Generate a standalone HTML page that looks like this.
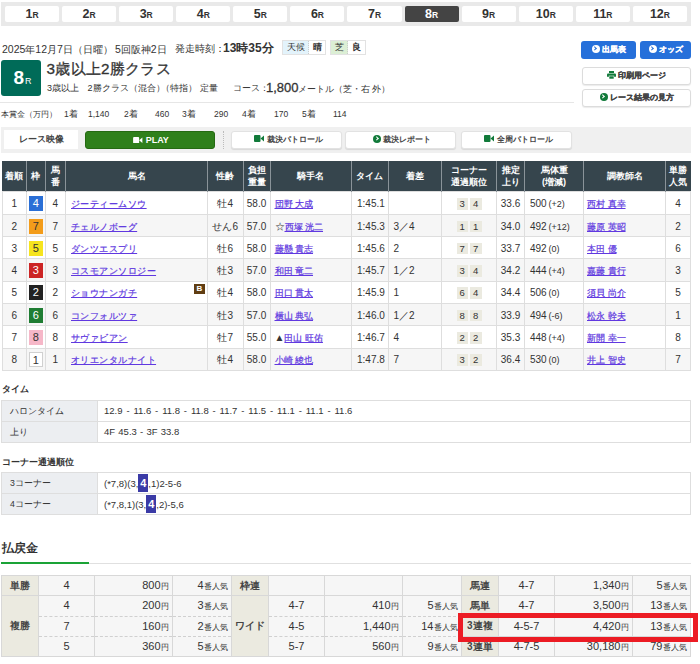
<!DOCTYPE html>
<html lang="ja">
<head>
<meta charset="utf-8">
<style>
*{box-sizing:border-box;margin:0;padding:0}
html,body{width:700px;height:664px;overflow:hidden;background:#fff}
body{font-family:"Liberation Sans",sans-serif;color:#333;font-size:10px;position:relative;line-height:1.2}
.abs{position:absolute}
/* race tabs */
#tabs{left:1px;top:2px;width:690px;height:24px;background:#e9e9e9;display:flex;padding:4px;gap:3px}
#tabs div{flex:1;background:#fff;border-radius:2px;text-align:center;font-weight:bold;font-size:12.5px;line-height:16px;color:#333}
#tabs div small{font-size:8.5px;font-weight:bold}
#tabs div.cur{background:#444;color:#fff}
/* header */
.dl{font-size:9.5px;white-space:nowrap;top:43px}
.big{font-weight:bold;font-size:13px}
.dl .n{font-size:10.5px}
#rno{left:1px;top:60px;width:40px;height:36px;background:#006b58;border-radius:3px;color:#fff;text-align:center;font-weight:bold;font-size:19px;line-height:36px;padding-left:3px}
#rno small{font-size:9px;font-weight:normal;margin-left:1px}
.wbox{top:40px;height:15px;border:1px solid #e2e2e2;display:flex;font-size:9px;line-height:13px}
.wbox span{display:block;text-align:center}
.btnb{top:41px;height:18px;background:#2670da;border-radius:3px;color:#fff;font-weight:bold;font-size:8px;line-height:18px;text-align:center}
.btnb .ci:after{border-color:#2670da}
.btnw{left:582px;width:109px;height:18px;background:#fff;border:1px solid #dcdcdc;border-radius:3px;box-shadow:0 1px 1px rgba(0,0,0,.08);font-weight:bold;font-size:8px;line-height:16px;text-align:center;color:#444}
.ci{display:inline-block;width:8px;height:8px;border-radius:50%;vertical-align:-1px;margin-right:2px;position:relative}
.ci:after{content:"";position:absolute;left:1.6px;top:2.4px;width:2.4px;height:2.4px;border-top:1.3px solid #fff;border-right:1.3px solid #fff;transform:rotate(45deg)}
.pr{display:inline-block;width:9px;height:8px;vertical-align:-1px;margin-right:2px}
/* prize */
.prize{top:109px;font-size:8.5px;white-space:nowrap}
/* video bar */
#vbar{left:1px;top:127px;width:690px;height:26px;background:#f0f0f0}
.vb{top:131px;height:18px;background:#fff;border-radius:3px;border:1px solid #e2e2e2;box-shadow:0 1px 1px rgba(0,0,0,.1);font-size:8px;padding-left:3px;font-weight:bold;line-height:16px;text-align:center;color:#444}
/* result table */
table{border-collapse:collapse;table-layout:fixed}
#res{left:1.5px;top:161px;width:689px}
#res th{background:#36454d;color:#fff;font-size:9px;font-weight:bold;border-left:1px solid #8a9399;height:30px;line-height:12px;text-align:center}
#res th:first-child{border-left:none}
#res td{border:1px solid #dedede;height:22.3px;font-size:10px;text-align:center;white-space:nowrap;overflow:hidden;padding-top:2px}
#res tr:nth-child(odd) td{background:#f6f6f6}
#res tr:nth-child(2) td{height:23.4px;padding-top:3px}
#res td.l{text-align:left;padding-left:5px}
#res a{color:#6038e0;text-decoration:underline;font-size:9.2px;letter-spacing:.45px;-webkit-text-stroke:.2px #6038e0}
#res td.nm{position:relative}
#res td.jk a{letter-spacing:0;font-size:9px}
#res td.jk{padding-left:4px}
.bl{position:absolute;right:2px;top:2.5px;width:11px;height:10px;background:#603d12;color:#fff;font-weight:bold;font-size:8px;line-height:10px;text-align:center}
.fr{display:inline-block;width:14.5px;height:15px;line-height:15px;font-size:11px;vertical-align:middle;margin-top:-1px}
.cb{display:inline-block;width:11.5px;height:11.5px;background:#ebeae0;font-size:9.5px;line-height:12px;margin:0 1px}
.wt small{font-size:9px;margin-left:-1px}
/* section heads */
.sh{font-weight:bold;font-size:9px;left:2px}
.st{left:1px;width:690px}
.st td{border:1px solid #dedede;height:21px;font-size:9.5px;padding-left:6px}
.st td.h{width:96px;background:#eceef1;padding-left:8px;font-size:8.7px}
.st span.t{display:inline-block;word-spacing:1.25px}
.hl{display:inline-block;background:#3b3ba6;color:#fff;font-weight:bold;width:10px;text-align:center;height:18px;line-height:18px;font-size:11px}
/* payout */
.pt{top:575px;width:231px}
.pt td{border:1px solid #d8d8d8;background:#f6f6f6;height:20.3px;font-size:11px;text-align:center;white-space:nowrap}
.pt td.h{background:#ebeae0;font-weight:bold;font-size:10px;color:#444}
.pt td.y{text-align:right;padding-right:3px}
.pt td.y small{font-size:8px}
.pt td.n{text-align:right;padding-right:3px}
.pt td.n small{font-size:8px}
.pt tr.dt td{border-top:1px dashed #d0d0d0}
.pt tr.db td{border-bottom:1px dashed #d0d0d0}
.pt tr td.h{border-top:1px solid #d8d8d8;border-bottom:1px solid #d8d8d8}
.btnb,.btnw{-webkit-text-stroke:.2px currentColor}
</style>
</head>
<body>
<div id="tabs" class="abs">
<div>1<small>R</small></div><div>2<small>R</small></div><div>3<small>R</small></div><div>4<small>R</small></div><div>5<small>R</small></div><div>6<small>R</small></div><div>7<small>R</small></div><div class="cur">8<small>R</small></div><div>9<small>R</small></div><div>10<small>R</small></div><div>11<small>R</small></div><div>12<small>R</small></div>
</div>

<div class="abs dl" style="left:2px"><span class="n">2025</span>年<span class="n">12</span>月<span class="n">7</span>日（日曜）</div>
<div class="abs dl" style="left:115px"><span class="n">5</span>回阪神<span class="n">2</span>日</div>
<div class="abs dl" style="left:175px">発走時刻：</div>
<div class="abs dl big" style="left:223px;top:41px;font-size:12px">13時35分</div>
<div class="abs wbox" style="left:282px;width:44px"><span style="width:26px;background:#e3f3fb;border-right:1px dotted #ccc">天候</span><span style="flex:1;font-weight:bold">晴</span></div>
<div class="abs wbox" style="left:330px;width:36px"><span style="width:17px;background:#dcefd5;border-right:1px dotted #ccc">芝</span><span style="flex:1;font-weight:bold">良</span></div>

<div id="rno" class="abs">8<small>R</small></div>
<div class="abs" style="left:46.5px;top:60px;font-size:15.3px;letter-spacing:.25px;white-space:nowrap;-webkit-text-stroke:.3px #333">3歳以上2勝クラス</div>
<div class="abs" style="left:47px;top:83px;font-size:9px;white-space:nowrap">3歳以上<span style="display:inline-block;width:8.5px"></span>2勝クラス（混合）<span style="margin-left:-4px">（特指）</span></div>
<div class="abs" style="left:200px;top:83px;font-size:9px">定量</div>
<div class="abs" style="left:233px;top:83px;font-size:9px">コース：</div>
<div class="abs" style="left:266px;top:80px;font-size:13px;-webkit-text-stroke:.3px #333">1,800</div>
<div class="abs" style="left:298px;top:83.5px;font-size:8.5px;white-space:nowrap">メートル（芝・右 外）</div>

<div class="abs btnb" style="left:581px;width:55px"><span class="ci" style="background:#fff"></span>出馬表</div>
<div class="abs btnb" style="left:640px;width:51px"><span class="ci" style="background:#fff"></span>オッズ</div>
<div class="abs btnw" style="top:67px"><svg class="pr" viewBox="0 0 9 8"><rect x="2" y="0" width="5" height="2" fill="#117a3a"/><rect x="0" y="2.5" width="9" height="3.5" rx="1" fill="#117a3a"/><rect x="2" y="5" width="5" height="3" fill="#117a3a" stroke="#fff" stroke-width=".6"/></svg>印刷用ページ</div>
<div class="abs btnw" style="top:89px"><span class="ci" style="background:#117a3a"></span>レース結果の見方</div>

<div class="abs" style="left:0;top:102px;width:574px;height:1px;background:#e6e6e6"></div>
<div class="abs prize" style="left:1px;font-size:8px;top:109.5px">本賞金（万円）</div>
<div class="abs prize" style="left:64px">1着</div><div class="abs prize" style="left:88px">1,140</div>
<div class="abs prize" style="left:124px">2着</div><div class="abs prize" style="left:155px">460</div>
<div class="abs prize" style="left:182px">3着</div><div class="abs prize" style="left:214px">290</div>
<div class="abs prize" style="left:242px">4着</div><div class="abs prize" style="left:274px">170</div>
<div class="abs prize" style="left:302px">5着</div><div class="abs prize" style="left:333px">114</div>

<div id="vbar" class="abs"></div>
<div class="abs" style="left:4px;top:130px;width:74px;height:19px;background:#fff;font-size:9px;font-weight:bold;line-height:19px;text-align:center;color:#444">レース映像</div>
<div class="abs" style="left:85px;top:131px;width:130px;height:18px;background:#2f801b;border:1px solid #256a12;border-radius:3px;color:#fff;font-weight:bold;font-size:9px;line-height:16px;text-align:center;padding-left:2px"><svg width="9.5" height="6.5" viewBox="0 0 10 7" style="vertical-align:0;margin-right:3px"><rect x="0" y="0" width="6.5" height="7" rx="1" fill="#fff"/><path d="M6.5 3.5 L10 0.5 V6.5 Z" fill="#fff"/></svg>PLAY</div>
<div class="abs" style="left:223px;top:131px;height:18px;border-left:1px dotted #bbb"></div>
<div class="abs vb" style="left:231px;width:111px"><svg width="10" height="7" viewBox="0 0 10 7" style="vertical-align:0;margin-right:3px"><rect x="0" y="0" width="6.5" height="7" rx="1" fill="#117a3a"/><path d="M6.5 3.5 L10 0.5 V6.5 Z" fill="#117a3a"/></svg>裁決パトロール</div>
<div class="abs vb" style="left:345px;width:111px"><span class="ci" style="background:#117a3a"></span>裁決レポート</div>
<div class="abs vb" style="left:461px;width:111px"><svg width="10" height="7" viewBox="0 0 10 7" style="vertical-align:0;margin-right:3px"><rect x="0" y="0" width="6.5" height="7" rx="1" fill="#117a3a"/><path d="M6.5 3.5 L10 0.5 V6.5 Z" fill="#117a3a"/></svg>全周パトロール</div>

<table id="res" class="abs">
<colgroup><col style="width:24.5px"><col style="width:18.5px"><col style="width:20.5px"><col style="width:142px"><col style="width:35.5px"><col style="width:27px"><col style="width:81.5px"><col style="width:36.5px"><col style="width:53.5px"><col style="width:55px"><col style="width:28px"><col style="width:59px"><col style="width:82px"><col style="width:25px"></colgroup>
<tr><th>着順</th><th>枠</th><th>馬<br>番</th><th>馬名</th><th>性齢</th><th>負担<br>重量</th><th>騎手名</th><th>タイム</th><th>着差</th><th>コーナー<br>通過順位</th><th>推定<br>上り</th><th>馬体重<br>(増減)</th><th>調教師名</th><th>単勝<br>人気</th></tr>
<tr><td>1</td><td><span class="fr" style="background:#2a6fd6;color:#fff;border:none">4</span></td><td>4</td><td class="l nm"><a>ジーティームソウ</a></td><td>牡4</td><td>58.0</td><td class="l jk"><a>団野 大成</a></td><td class="l">1:45.1</td><td class="l"></td><td><span class="cb">3</span><span class="cb">4</span></td><td>33.6</td><td class="l wt">500 <small>(+2)</small></td><td class="l jk" style="padding-left:3px"><a>西村 真幸</a></td><td>4</td></tr>
<tr><td>2</td><td><span class="fr" style="background:#f39c1a;color:#333;border:none">7</span></td><td>7</td><td class="l nm"><a>チェルノボーグ</a></td><td>せん6</td><td>57.0</td><td class="l jk">☆<a>西塚 洸二</a></td><td class="l">1:45.3</td><td class="l">3／4</td><td><span class="cb">1</span><span class="cb">1</span></td><td>34.0</td><td class="l wt">492 <small>(+12)</small></td><td class="l jk" style="padding-left:3px"><a>藤原 英昭</a></td><td>2</td></tr>
<tr><td>3</td><td><span class="fr" style="background:#f6e41e;color:#333;border:none">5</span></td><td>5</td><td class="l nm"><a>ダンツエスプリ</a></td><td>牡6</td><td>58.0</td><td class="l jk"><a>藤懸 貴志</a></td><td class="l">1:45.6</td><td class="l">2</td><td><span class="cb">7</span><span class="cb">7</span></td><td>33.7</td><td class="l wt">492 <small>(0)</small></td><td class="l jk" style="padding-left:3px"><a>本田 優</a></td><td>6</td></tr>
<tr><td>4</td><td><span class="fr" style="background:#cc2424;color:#fff;border:none">3</span></td><td>3</td><td class="l nm"><a>コスモアンソロジー</a></td><td>牡3</td><td>57.0</td><td class="l jk"><a>和田 竜二</a></td><td class="l">1:45.7</td><td class="l">1／2</td><td><span class="cb">3</span><span class="cb">4</span></td><td>34.2</td><td class="l wt">444 <small>(+4)</small></td><td class="l jk" style="padding-left:3px"><a>嘉藤 貴行</a></td><td>3</td></tr>
<tr><td>5</td><td><span class="fr" style="background:#222;color:#fff;border:none">2</span></td><td>2</td><td class="l nm"><a>ショウナンガチ</a><span class="bl">B</span></td><td>牡4</td><td>58.0</td><td class="l jk"><a>田口 貫太</a></td><td class="l">1:45.9</td><td class="l">1</td><td><span class="cb">6</span><span class="cb">4</span></td><td>34.4</td><td class="l wt">506 <small>(0)</small></td><td class="l jk" style="padding-left:3px"><a>須貝 尚介</a></td><td>5</td></tr>
<tr><td>6</td><td><span class="fr" style="background:#1f7d33;color:#fff;border:none">6</span></td><td>6</td><td class="l nm"><a>コンフォルツァ</a></td><td>牡3</td><td>57.0</td><td class="l jk"><a>横山 典弘</a></td><td class="l">1:46.0</td><td class="l">1／2</td><td><span class="cb">8</span><span class="cb">8</span></td><td>33.9</td><td class="l wt">494 <small>(-6)</small></td><td class="l jk" style="padding-left:3px"><a>松永 幹夫</a></td><td>1</td></tr>
<tr><td>7</td><td><span class="fr" style="background:#f6b7c8;color:#333;border:none">8</span></td><td>8</td><td class="l nm"><a>サヴァビアン</a></td><td>牡7</td><td>55.0</td><td class="l jk">▲<a>田山 旺佑</a></td><td class="l">1:46.7</td><td class="l">4</td><td><span class="cb">2</span><span class="cb">2</span></td><td>35.3</td><td class="l wt">448 <small>(+4)</small></td><td class="l jk" style="padding-left:3px"><a>新開 幸一</a></td><td>8</td></tr>
<tr><td>8</td><td><span class="fr" style="background:#fff;color:#333;border:1px solid #d0d0d0">1</span></td><td>1</td><td class="l nm"><a>オリエンタルナイト</a></td><td>牡4</td><td>58.0</td><td class="l jk"><a>小崎 綾也</a></td><td class="l">1:47.8</td><td class="l">7</td><td><span class="cb">3</span><span class="cb">2</span></td><td>36.4</td><td class="l wt">530 <small>(0)</small></td><td class="l jk" style="padding-left:3px"><a>井上 智史</a></td><td>7</td></tr>
</table>

<div class="abs sh" style="top:383.5px">タイム</div>
<table class="abs st" style="top:400px">
<tr><td class="h">ハロンタイム</td><td><span class="t">12.9 - 11.6 - 11.8 - 11.8 - 11.7 - 11.5 - 11.1 - 11.1 - 11.6</span></td></tr>
<tr><td class="h">上り</td><td><span class="t" style="word-spacing:.6px">4F 45.3 - 3F 33.8</span></td></tr>
</table>
<div class="abs sh" style="top:456.5px">コーナー通過順位</div>
<table class="abs st" style="top:472px">
<tr><td class="h">3コーナー</td><td>(*7,8)(3,<span class="hl">4</span>,1)2-5-6</td></tr>
<tr><td class="h">4コーナー</td><td>(*7,8,1)(3,<span class="hl">4</span>,2)-5,6</td></tr>
</table>

<div class="abs" style="left:1.5px;top:541.5px;font-size:11.5px;font-weight:bold">払戻金</div>
<div class="abs" style="left:1px;top:563px;width:690px;height:1px;background:#e0e0e0"></div>
<div class="abs" style="left:1px;top:562px;width:88px;height:2px;background:#1aa336"></div>

<table class="abs pt" style="left:0.5px"><colgroup><col style="width:37.5px"><col style="width:56px"><col style="width:77.5px"><col style="width:59px"></colgroup>
<tr><td class="h" rowspan="1">単勝</td><td>4</td><td class="y">800<small>円</small></td><td class="n">4<small>番人気</small></td></tr>
<tr class="db"><td class="h" rowspan="3">複勝</td><td>4</td><td class="y">200<small>円</small></td><td class="n">3<small>番人気</small></td></tr>
<tr class="dt db"><td>7</td><td class="y">160<small>円</small></td><td class="n">2<small>番人気</small></td></tr>
<tr class="dt"><td>5</td><td class="y">360<small>円</small></td><td class="n">5<small>番人気</small></td></tr>
</table>
<table class="abs pt" style="left:230.5px"><colgroup><col style="width:37.5px"><col style="width:56px"><col style="width:77.5px"><col style="width:59px"></colgroup>
<tr><td class="h" rowspan="1">枠連</td><td></td><td class="y"></td><td class="n"></td></tr>
<tr class="db"><td class="h" rowspan="3">ワイド</td><td>4-7</td><td class="y">410<small>円</small></td><td class="n">5<small>番人気</small></td></tr>
<tr class="dt db"><td>4-5</td><td class="y">1,440<small>円</small></td><td class="n">14<small>番人気</small></td></tr>
<tr class="dt"><td>5-7</td><td class="y">560<small>円</small></td><td class="n">9<small>番人気</small></td></tr>
</table>
<table class="abs pt" style="left:460.5px;width:230px"><colgroup><col style="width:37.5px"><col style="width:56px"><col style="width:77.5px"><col style="width:58px"></colgroup>
<tr><td class="h">馬連</td><td>4-7</td><td class="y">1,340<small>円</small></td><td class="n">5<small>番人気</small></td></tr>
<tr><td class="h">馬単</td><td>4-7</td><td class="y">3,500<small>円</small></td><td class="n">13<small>番人気</small></td></tr>
<tr><td class="h">3連複</td><td>4-5-7</td><td class="y">4,420<small>円</small></td><td class="n">13<small>番人気</small></td></tr>
<tr><td class="h">3連単</td><td>4-7-5</td><td class="y">30,180<small>円</small></td><td class="n">79<small>番人気</small></td></tr>
</table>
<div class="abs" style="left:458px;top:613px;width:240px;height:29px;border:5px solid #ec1c24"></div>
</body>
</html>
